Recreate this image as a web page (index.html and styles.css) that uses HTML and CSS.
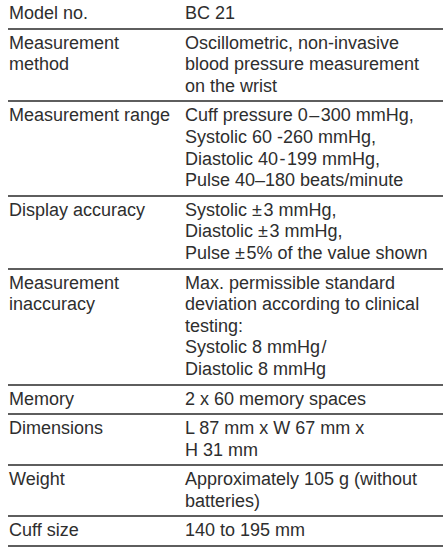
FILE: index.html
```html
<!DOCTYPE html>
<html>
<head>
<meta charset="utf-8">
<link rel="stylesheet" href="styles.css">
</head>
<body>
<div class="specs">
  <div class="row">
    <div class="label">Model no.</div>
    <div class="value">BC 21</div>
  </div>
  <div class="row">
    <div class="label">Measurement<br>method</div>
    <div class="value">Oscillometric, non-invasive<br>blood pressure measurement<br>on the wrist</div>
  </div>
  <div class="row">
    <div class="label">Measurement range</div>
    <div class="value">Cuff pressure 0&#8202;&#8211;&#8202;300 mmHg,<br>Systolic 60 -260 mmHg,<br>Diastolic 40&#8202;-&#8202;199 mmHg,<br>Pulse 40&#8211;180 beats/minute</div>
  </div>
  <div class="row">
    <div class="label">Display accuracy</div>
    <div class="value">Systolic &#177;&#8202;3 mmHg,<br>Diastolic &#177;&#8202;3 mmHg,<br>Pulse &#177;&#8202;5% of the value shown</div>
  </div>
  <div class="row">
    <div class="label">Measurement<br>inaccuracy</div>
    <div class="value">Max. permissible standard<br>deviation according to clinical<br>testing:<br>Systolic 8 mmHg&#8202;/<br>Diastolic 8 mmHg</div>
  </div>
  <div class="row">
    <div class="label">Memory</div>
    <div class="value">2 x 60 memory spaces</div>
  </div>
  <div class="row">
    <div class="label">Dimensions</div>
    <div class="value">L 87 mm x W 67 mm x<br>H 31 mm</div>
  </div>
  <div class="row">
    <div class="label">Weight</div>
    <div class="value">Approximately 105 g (without<br>batteries)</div>
  </div>
  <div class="row">
    <div class="label">Cuff size</div>
    <div class="value">140 to 195 mm</div>
  </div>
</div>
</body>
</html>
```

FILE: styles.css
```css
html, body {
  margin: 0;
  padding: 0;
  background: #ffffff;
}

body {
  font-family: "Liberation Sans", Arial, sans-serif;
  font-size: 18px;
  line-height: 21.6px;
  color: #2e2e2e;
}

.specs {
  width: 435px;
  margin-left: 8px;
  padding-top: 3px;
}

.row {
  display: grid;
  grid-template-columns: 177px 1fr;
  padding: 3px 0 3px;
  border-bottom: 2px solid #5e5e5e;
}

.row:first-child {
  padding-top: 0;
}

.label {
  padding-left: 1px;
}

.value {
  white-space: nowrap;
}
```
